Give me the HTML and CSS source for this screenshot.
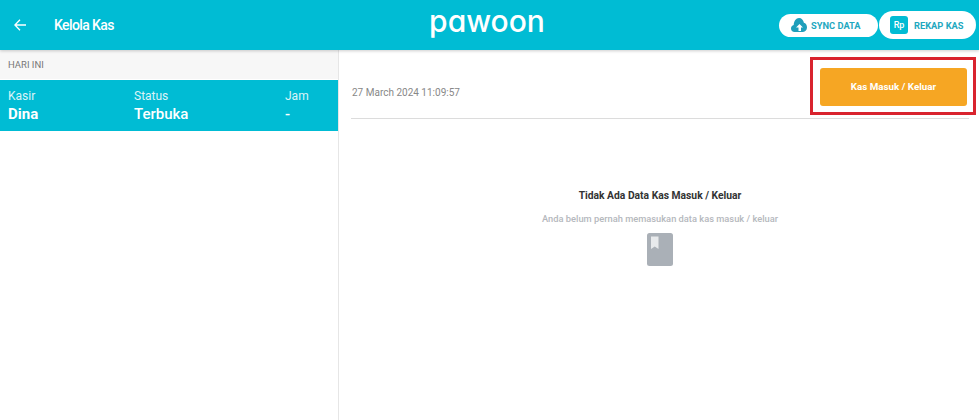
FILE: index.html

```html
<!DOCTYPE html>
<html lang="en">
<head>
  <meta charset="UTF-8">
  <title>Kelola Kas</title>
  <link rel="stylesheet" href="styles.css">
</head>
<body>
  <header class="topbar">
    <div class="topbar-left">
      <svg class="back-icon" width="12" height="12" viewBox="0 0 12 12" fill="none" stroke="#fff" stroke-width="1.3">
        <path d="M12 6H1M6 .7.900 6 6 11.300"/>
      </svg>
      <h1 class="page-title">Kelola Kas</h1>
    </div>
    <div class="logo">pawoon</div>
    <div class="topbar-actions">
      <button class="pill pill-sync">
        <svg width="16" height="14" viewBox="0 0 16 14">
          <path fill="#1f9fbb" d="M3.500 14C1.500 14 0 12.500 0 10.500 0 8.800 1.100 7.400 2.700 7 2.900 3.100 5.100 0 8 0c2.600 0 4.500 2.100 4.900 4.800C14.700 5.300 16 7 16 9.300 16 12 14.300 14 12 14z"/>
          <path fill="#fff" d="M8.500 6 12 9.500H10V13H7.500V9.500H5z"/>
        </svg>
        <span>SYNC DATA</span>
      </button>
      <button class="pill pill-rekap">
        <span class="rp-badge">Rp</span>
        <span>REKAP KAS</span>
      </button>
    </div>
  </header>

  <main class="content">
    <aside class="sidebar">
      <div class="day-label">HARI INI</div>
      <div class="shift-row">
        <div class="shift-col col-kasir">
          <span class="shift-key">Kasir</span>
          <strong class="shift-name">Dina</strong>
        </div>
        <div class="shift-col col-status">
          <span class="shift-key">Status</span>
          <span class="shift-value">Terbuka</span>
        </div>
        <div class="shift-col col-jam">
          <span class="shift-key">Jam</span>
          <span class="shift-value">-</span>
        </div>
      </div>
    </aside>

    <section class="detail">
      <div class="detail-head">
        <span class="detail-date">27 March 2024 11:09:57</span>
        <div class="highlight">
          <button class="btn-kas">Kas Masuk / Keluar</button>
        </div>
      </div>
      <div class="empty">
        <h2 class="empty-title">Tidak Ada Data Kas Masuk / Keluar</h2>
        <p class="empty-text">Anda belum pernah memasukan data kas masuk / keluar</p>
        <svg width="26" height="33" viewBox="0 0 26 33">
          <rect width="26" height="33" rx="2.500" fill="#aab0b7"/>
          <path fill="#e8eaec" d="M4 3.500h7.500V16l-3.750-2.500L4 16z"/>
        </svg>
      </div>
    </section>
  </main>
</body>
</html>
```

FILE: styles.css

```css
* {
  box-sizing: border-box;
}

body {
  margin: 0;
  height: 420px;
  overflow: hidden;
  font-family: Roboto, "Liberation Sans", sans-serif;
  background: #fff;
  color: #333;
  display: flex;
  flex-direction: column;
}

.topbar {
  height: 50px;
  flex: none;
  background: #00bcd4;
  display: grid;
  grid-template-columns: 1fr auto 1fr;
  align-items: center;
  box-shadow: 0 1px 3px rgba(0,0,0,0.2);
  position: relative;
  padding: 0 3px 0 14px;
}

.topbar-left {
  display: flex;
  align-items: center;
  gap: 28px;
}

.page-title {
  margin: 0;
  font-size: 14px;
  font-weight: 500;
  letter-spacing: -0.6px;
  color: #fff;
}

.logo {
  font-family: Inter, "DejaVu Sans", sans-serif;
  font-feature-settings: "cv11";
  font-size: 30px;
  font-weight: 500;
  line-height: 1;
  color: #fff;
  margin-top: -8px;
  margin-left: -16px;
}

.topbar-actions {
  display: flex;
  align-items: center;
  justify-content: flex-end;
}

.pill {
  border: none;
  background: #fff;
  color: #1fa8c0;
  font-family: inherit;
  font-weight: 700;
  font-size: 9.3px;
  border-radius: 14px;
  display: flex;
  align-items: center;
  padding: 0;
}

.pill-sync {
  width: 99px;
  height: 23px;
  gap: 4px;
  padding-left: 12px;
}

.pill-rekap {
  width: 97px;
  height: 28px;
  margin-left: 1px;
  gap: 6px;
  padding-left: 11px;
}

.rp-badge {
  width: 18px;
  height: 18px;
  border-radius: 3px;
  background: #00bcd4;
  color: #fff;
  font-size: 9px;
  font-weight: 500;
  display: flex;
  align-items: center;
  justify-content: center;
}

.content {
  flex: 1;
  display: flex;
}

.sidebar {
  width: 339px;
  border-right: 1px solid #e6e6e6;
}

.day-label {
  height: 29px;
  background: #f7f7f7;
  color: #777;
  font-size: 9.5px;
  padding: 9px 8px 0;
}

.shift-row {
  height: 51px;
  margin-top: 1px;
  background: #00bcd4;
  color: #fff;
  display: flex;
  padding-top: 9px;
}

.shift-col {
  display: flex;
  flex-direction: column;
  gap: 1px;
}

.col-kasir {
  width: 134px;
  padding-left: 8px;
}

.col-status {
  width: 151px;
}

.shift-key {
  font-size: 12px;
  line-height: 14px;
  opacity: 0.85;
}

.shift-name,
.shift-value {
  font-size: 15px;
  line-height: 20px;
  font-weight: 500;
}

.shift-name {
  font-weight: 700;
}

.detail {
  flex: 1;
  padding: 0 10px 0 12px;
}

.detail-head {
  height: 69px;
  border-bottom: 1px solid #dcdcdc;
  display: flex;
  align-items: center;
  justify-content: space-between;
}

.detail-date {
  font-size: 10px;
  color: #888;
  margin-top: 16px;
  margin-left: 1px;
}

.highlight {
  border: 3px solid #d9232e;
  width: 166px;
  height: 58px;
  margin-top: 3px;
  margin-right: -7px;
  padding: 8px 6px 0 7px;
}

.btn-kas {
  display: block;
  width: 100%;
  height: 38px;
  border: none;
  border-radius: 3px;
  background: #f6a623;
  color: #fff;
  font-family: inherit;
  font-weight: 700;
  font-size: 9.8px;
}

.empty {
  display: flex;
  flex-direction: column;
  align-items: center;
  padding-top: 70px;
}

.empty-title {
  margin: 0;
  font-size: 10.3px;
  font-weight: 700;
  color: #333;
}

.empty-text {
  margin: 11px 0 9px;
  font-size: 9.3px;
  font-weight: 500;
  color: #b5b8bd;
}
```
